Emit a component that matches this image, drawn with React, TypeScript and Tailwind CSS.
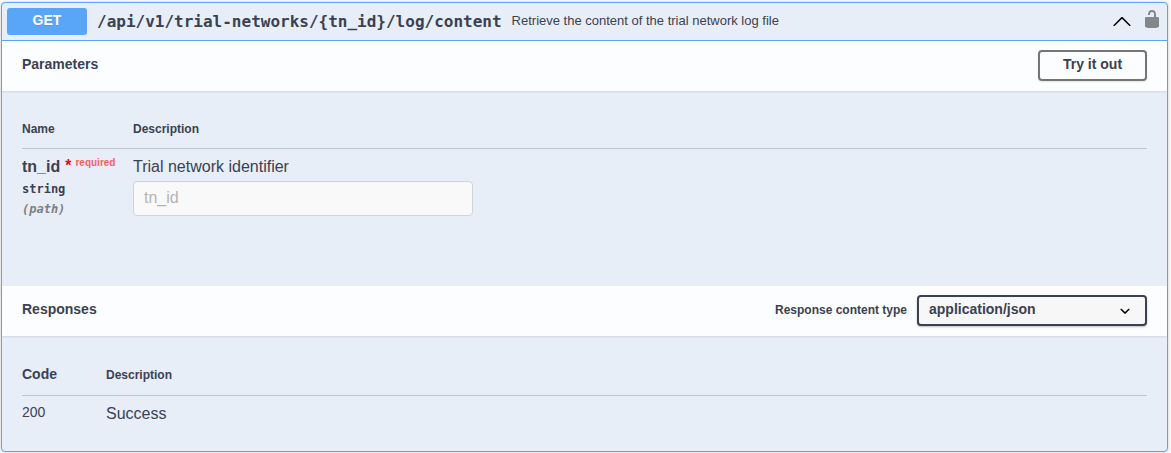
import React from "react";

const sans = "font-['Liberation_Sans',Arial,sans-serif]";
const mono = "font-['DejaVu_Sans_Mono',monospace]";

function ArrowUp() {
  return (
    <svg viewBox="0 0 20 20" className="h-5 w-5 shrink-0" fill="#000">
      <path d="M17.418 14.908C17.69 15.176 18.127 15.176 18.397 14.908C18.667 14.64 18.668 14.207 18.397 13.939L10.489 6.109C10.219 5.841 9.782 5.841 9.51 6.109L1.602 13.939C1.332 14.207 1.332 14.64 1.602 14.908C1.873 15.176 2.311 15.176 2.581 14.908L10 7.767L17.418 14.908Z" />
    </svg>
  );
}

function Unlocked() {
  return (
    <svg viewBox="0 0 20 20" className="h-5 w-5 shrink-0" fill="#848789">
      <path d="M15.8 8H14V5.6C14 2.703 12.665 1 10 1 7.334 1 6 2.703 6 5.6V6h2v-.801C8 3.754 8.797 3 10 3c1.203 0 2 .754 2 2.199V8H4c-.553 0-1 .646-1 1.199V17c0 .549.428 1.139.951 1.307l1.197.387C5.672 18.861 6.55 19 7.1 19h5.8c.549 0 1.428-.139 1.951-.307l1.196-.387c.524-.167.953-.757.953-1.306V9.199C17 8.646 16.352 8 15.8 8z" />
    </svg>
  );
}

function ArrowDown() {
  return (
    <svg viewBox="0 0 20 20" className="h-5 w-5 shrink-0" fill="#000">
      <path d="M13.418 7.859c.271-.268.709-.268.978 0 .27.268.272.701 0 .969l-3.908 3.83c-.27.268-.707.268-.979 0l-3.908-3.83c-.27-.267-.27-.701 0-.969.271-.268.709-.268.978 0L10 11l3.418-3.141z" />
    </svg>
  );
}

function SectionHeader({ title, children }: { title: string; children: React.ReactNode }) {
  return (
    <div className="flex h-[50px] items-start justify-between bg-[#fbfdff] px-5 pt-[9px] shadow-[0_1px_2px_rgba(0,0,0,0.1)]">
      <h4 className="pt-1 text-sm leading-5 font-bold">{title}</h4>
      {children}
    </div>
  );
}

export default function App() {
  return (
    <div className={`h-[453px] overflow-hidden bg-[#fafafa] pt-0.5 pr-[3px] pl-px text-[#3b4151] ${sans}`}>
      <div className="flex h-[450px] flex-col rounded border border-[#59a6f9] bg-[#e7eef8] shadow-[0_0_3px_rgba(0,0,0,0.19)]">
        <div className="flex h-[38px] shrink-0 items-center border-b border-[#59a6f9] px-[5px]">
          <span className="h-[27px] w-20 rounded-[3px] bg-[#59a6f9] text-center text-sm leading-[25px] font-bold text-white [text-shadow:0_1px_0_rgba(0,0,0,0.1)]">
            GET
          </span>
          <span className={`pl-2.5 text-base leading-5 font-bold ${mono}`}>
            /api/v1/trial-networks/&#123;tn_id&#125;/log/content
          </span>
          <span className="pb-0.5 pl-2.5 text-[13px] leading-5">
            Retrieve the content of the trial network log file
          </span>
          <div className="ml-auto flex items-start gap-2.5 pb-1">
            <div className="pt-0.5">
              <ArrowUp />
            </div>
            <Unlocked />
          </div>
        </div>

        <SectionHeader title="Parameters">
          <button className="h-[31px] w-[109px] rounded border-2 border-[#757575] pb-[3px] text-sm leading-5 font-bold shadow-[0_1px_2px_rgba(0,0,0,0.1)]">
            Try it out
          </button>
        </SectionHeader>

        <div className="h-[195px] px-5 pt-7">
          <div className="flex h-[30px] border-b border-[#bdc4cd] text-xs leading-5 font-bold">
            <div className="w-[111px]">Name</div>
            <div>Description</div>
          </div>
          <div className="flex pt-2">
            <div className="w-[111px]">
              <div className="flex h-5 text-base leading-5 font-bold">
                <span>tn_id</span>
                <span className="pl-[5px] text-base leading-[18px] text-[#f00]">*</span>
                <span className="-mt-1 pl-1 text-[10px] leading-5 text-[#f75d63]">required</span>
              </div>
              <div className={`pt-0.5 text-xs leading-5 font-bold ${mono}`}>string</div>
              <div className={`text-xs leading-5 font-bold text-[#808080] italic ${mono}`}>(path)</div>
            </div>
            <div>
              <div className="text-base leading-5">Trial network identifier</div>
              <input
                disabled
                placeholder="tn_id"
                className="mt-1 block h-[35px] w-[340px] rounded border border-[#d2d3d5] bg-[#f9f9f9] px-2.5 pb-0.5 text-base placeholder:text-[#b4b4b4]"
              />
            </div>
          </div>
        </div>

        <SectionHeader title="Responses">
          <label className="flex items-start">
            <span className="pt-[5px] pr-2.5 text-xs leading-5 font-bold">Response content type</span>
            <span className="flex h-[31px] w-[230px] items-center justify-between rounded border-2 border-[#3b4151] bg-[#f7f7f7] px-2.5 shadow-[0_1px_2px_rgba(0,0,0,0.25)]">
              <span className="pb-1 text-sm leading-5 font-bold">application/json</span>
              <span className="pt-px">
                <ArrowDown />
              </span>
            </span>
          </label>
        </SectionHeader>

        <div className="px-5 pt-7">
          <div className="flex h-8 border-b border-[#bdc4cd] font-bold">
            <div className="w-[84px] text-sm leading-5">Code</div>
            <div className="pt-px text-xs leading-5">Description</div>
          </div>
          <div className="flex pt-1.5">
            <div className="w-[84px] text-sm leading-5">200</div>
            <div className="pt-0.5 text-base leading-5">Success</div>
          </div>
        </div>
      </div>
    </div>
  );
}
